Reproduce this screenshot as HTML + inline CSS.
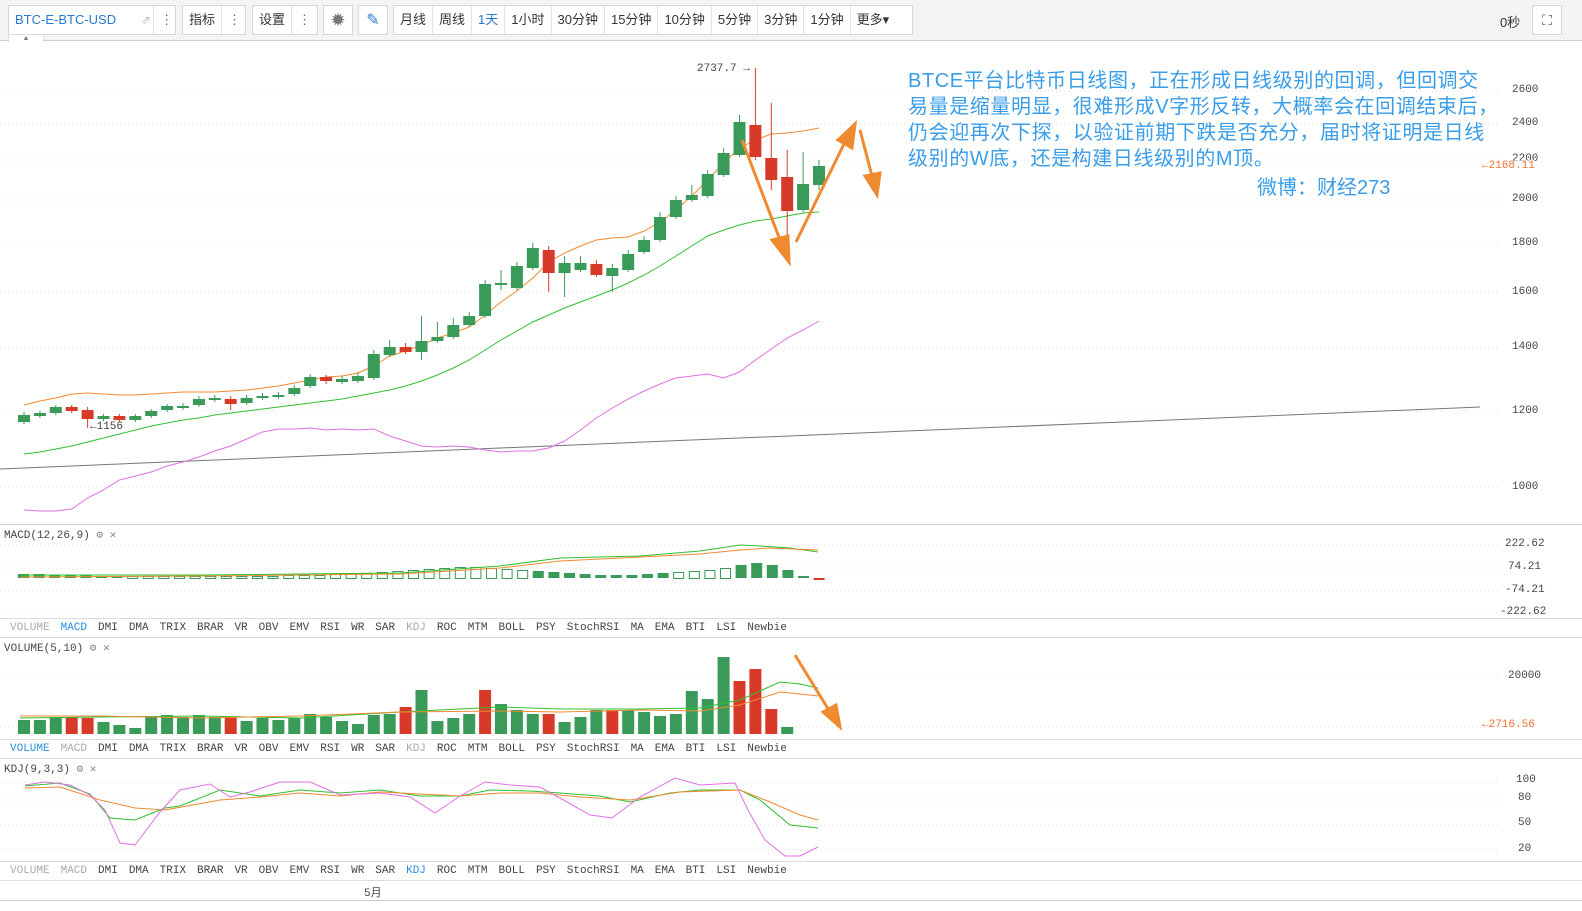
<!DOCTYPE html>
<html><head><meta charset="utf-8">
<style>
*{margin:0;padding:0;box-sizing:border-box}
body{width:1582px;height:911px;background:#fff;font-family:"Liberation Sans","Noto Sans CJK SC",sans-serif;position:relative;overflow:hidden;font-size:13px;color:#333}
.tb{position:absolute;left:0;top:0;width:1582px;height:41px;background:#f4f4f4;border-bottom:1px solid #ccc}
.bx{position:absolute;top:5px;height:30px;background:#fff;border:1px solid #d6d6d6;display:flex;align-items:center;white-space:nowrap}
.bx span{padding:0 6px;height:28px;line-height:28px;border-right:1px solid #e2e2e2;font-size:13px;white-space:nowrap;flex:none}
.bx span:last-child{border-right:none}
.mono{font-family:"Liberation Mono","DejaVu Sans Mono",monospace;font-size:11px}
.tabs{position:absolute;left:0;width:1582px;height:20px;border-top:1px solid #ddd;border-bottom:1px solid #ddd;font-family:"Liberation Mono",monospace;font-size:11px;color:#444;line-height:18px;padding-left:10px;white-space:nowrap}
.tabs b{font-weight:normal;margin-right:11px}
.g{color:#aaa}.bl{color:#2a8de0}
.ax{position:absolute;font-family:"Liberation Mono",monospace;font-size:11px;color:#444;white-space:nowrap}
.note{position:absolute;left:908px;top:68px;color:#3a9de8;font-size:20px;line-height:26px;letter-spacing:0.6px;white-space:nowrap}
</style></head><body>
<div class="tb">
 <div class="bx" style="left:8px;width:168px"><span style="color:#2a78d0;border:none;width:130px">BTC-E-BTC-USD</span><span style="color:#bbb;border:none;font-size:12px;padding:0 2px">⇗</span><span style="border-left:1px solid #e2e2e2;color:#666">⋮</span></div>
 <div class="bx" style="left:182px;width:64px"><span>指标</span><span style="color:#666">⋮</span></div>
 <div class="bx" style="left:252px;width:66px"><span>设置</span><span style="color:#666">⋮</span></div>
 <div class="bx" style="left:323px;width:30px;justify-content:center;color:#777;font-size:18px">✹</div>
 <div class="bx" style="left:358px;width:30px;justify-content:center;color:#2a78d0;font-size:16px">✎</div>
 <div class="bx" style="left:393px;width:520px"><span>月线</span><span>周线</span><span style="color:#2a78d0">1天</span><span>1小时</span><span>30分钟</span><span>15分钟</span><span>10分钟</span><span>5分钟</span><span>3分钟</span><span>1分钟</span><span>更多▾</span></div>
 <div style="position:absolute;left:1500px;top:12px;font-size:13px">0秒</div>
 <div class="bx" style="left:1532px;width:30px;justify-content:center;font-size:14px;color:#555">⛶</div>
 <div style="position:absolute;left:8px;top:34px;width:36px;height:8px;background:#fff;border:1px solid #ddd;border-bottom:none;font-size:7px;text-align:center;color:#777;line-height:8px">▲</div>
</div>
<svg id="s" width="1582" height="911" style="position:absolute;left:0;top:0"></svg>
<div class="note">BTCE平台比特币日线图，正在形成日线级别的回调，但回调交<br>易量是缩量明显，很难形成V字形反转，大概率会在回调结束后，<br>仍会迎再次下探，以验证前期下跌是否充分，届时将证明是日线<br>级别的W底，还是构建日线级别的M顶。</div>
<div style="position:absolute;left:1257px;top:171px;color:#3a9de8;font-size:20px">微博：财经273</div>
<div class="ax" style="left:1512px;top:84px">2600</div>
<div class="ax" style="left:1512px;top:117px">2400</div>
<div class="ax" style="left:1512px;top:153px">2200</div>
<div class="ax" style="left:1482px;top:160px;color:#f07030;background:rgba(255,255,255,.6)">←2168.11</div>
<div class="ax" style="left:1512px;top:193px">2000</div>
<div class="ax" style="left:1512px;top:237px">1800</div>
<div class="ax" style="left:1512px;top:286px">1600</div>
<div class="ax" style="left:1512px;top:341px">1400</div>
<div class="ax" style="left:1512px;top:405px">1200</div>
<div class="ax" style="left:1512px;top:481px">1000</div>
<div class="ax" style="left:697px;top:63px">2737.7 →</div>
<div class="ax" style="left:90px;top:421px">←1156</div>
<div class="ax" style="left:4px;top:528px">MACD(12,26,9) <span style="color:#888">⚙</span> <span style="color:#888">✕</span></div>
<div class="ax" style="left:1505px;top:538px">222.62</div>
<div class="ax" style="left:1508px;top:561px">74.21</div>
<div class="ax" style="left:1505px;top:584px">-74.21</div>
<div class="ax" style="left:1500px;top:606px">-222.62</div>
<div class="tabs" style="top:618px"><b class="g">VOLUME</b><b class="bl">MACD</b><b>DMI</b><b>DMA</b><b>TRIX</b><b>BRAR</b><b>VR</b><b>OBV</b><b>EMV</b><b>RSI</b><b>WR</b><b>SAR</b><b class="g">KDJ</b><b>ROC</b><b>MTM</b><b>BOLL</b><b>PSY</b><b>StochRSI</b><b>MA</b><b>EMA</b><b>BTI</b><b>LSI</b><b>Newbie</b></div>
<div class="ax" style="left:4px;top:641px">VOLUME(5,10) <span style="color:#888">⚙</span> <span style="color:#888">✕</span></div>
<div class="ax" style="left:1508px;top:670px">20000</div>
<div class="ax" style="left:1482px;top:719px;color:#f07030">←2716.56</div>
<div class="tabs" style="top:739px"><b class="bl">VOLUME</b><b class="g">MACD</b><b>DMI</b><b>DMA</b><b>TRIX</b><b>BRAR</b><b>VR</b><b>OBV</b><b>EMV</b><b>RSI</b><b>WR</b><b>SAR</b><b class="g">KDJ</b><b>ROC</b><b>MTM</b><b>BOLL</b><b>PSY</b><b>StochRSI</b><b>MA</b><b>EMA</b><b>BTI</b><b>LSI</b><b>Newbie</b></div>
<div class="ax" style="left:4px;top:762px">KDJ(9,3,3) <span style="color:#888">⚙</span> <span style="color:#888">✕</span></div>
<div class="ax" style="left:1516px;top:774px">100</div>
<div class="ax" style="left:1518px;top:792px">80</div>
<div class="ax" style="left:1518px;top:817px">50</div>
<div class="ax" style="left:1518px;top:843px">20</div>
<div class="tabs" style="top:861px"><b class="g">VOLUME</b><b class="g">MACD</b><b>DMI</b><b>DMA</b><b>TRIX</b><b>BRAR</b><b>VR</b><b>OBV</b><b>EMV</b><b>RSI</b><b>WR</b><b>SAR</b><b class="bl">KDJ</b><b>ROC</b><b>MTM</b><b>BOLL</b><b>PSY</b><b>StochRSI</b><b>MA</b><b>EMA</b><b>BTI</b><b>LSI</b><b>Newbie</b></div>
<div class="ax" style="left:364px;top:884px">5月</div>
<div style="position:absolute;left:0;top:900px;width:1582px;height:1px;background:#ccc"></div>
<script>
var s=document.getElementById('s'),h='';
function L(x1,y1,x2,y2,c,w,d){h+='<line x1="'+x1+'" y1="'+y1+'" x2="'+x2+'" y2="'+y2+'" stroke="'+c+'" stroke-width="'+(w||1)+'"'+(d?' stroke-dasharray="'+d+'"':'')+'/>';}
function P(pts,c,w){h+='<polyline fill="none" stroke="'+c+'" stroke-width="'+(w||1)+'" points="'+pts+'"/>';}
function R(x,y,w,hh,f,st){h+='<rect x="'+x+'" y="'+y+'" width="'+w+'" height="'+hh+'" fill="'+f+'"'+(st?' stroke="'+st+'"':'')+'/>';}
[91,124,160,200,243,292,348,411,487,545,568,591,613,677,727,782,800,825,850].forEach(function(y){L(0,y,1500,y,'#ddd',1,'1 3')});
L(0,524.5,1582,524.5,'#ccc');L(0,637.5,1582,637.5,'#ccc');
L(0,469,1480,407,'#777',1);
var C=[[1,415,422,412,424],[1,413,416,411,418],[1,407,413,405,415],[0,407,411,405,413],[0,410,419,407,428],[1,416,419,414,421],[0,416,420,414,422],[1,416,420,414,422],[1,411,416,409,418],[1,406,410,404,412],[1,406,408,403,410],[1,399,405,396,407],[1,398,400,395,402],[0,399,404,396,410],[1,398,403,395,405],[1,396,398,393,400],[1,395,397,392,399],[1,388,394,385,396],[1,377,386,374,388],[0,377,381,375,384],[1,379,382,376,384],[1,376,381,372,383],[1,354,378,350,380],[1,347,355,340,357],[0,347,352,343,354],[1,341,352,316,360],[1,337,341,322,343],[1,325,337,318,339],[1,316,325,312,327],[1,284,316,280,318],[1,283,285,270,290],[1,266,288,262,290],[1,248,268,243,270],[0,250,273,246,292],[1,263,273,256,297],[1,263,270,256,272],[0,264,275,260,277],[1,268,276,264,292],[1,254,270,250,272],[1,240,252,236,254],[1,217,240,212,242],[1,200,217,196,219],[1,195,200,185,202],[1,174,196,170,198],[1,153,175,148,177],[1,122,155,115,157],[0,125,157,68,160],[0,158,180,103,190],[0,177,211,150,262],[1,184,210,152,212],[1,166,185,160,190]];
var X=function(i){return 24+i*15.9};
var bu=[405,401,398,394,393,394,395,395,394,393,392,392,392,391,390,388,386,383,380,377,376,373,366,356,351,345,338,333,327,315,302,291,278,262,253,246,240,238,237,231,222,210,196,180,163,148,140,134,133,131,128];
var md=[454,452,449,446,442,438,434,430,426,423,420,418,415,413,411,409,407,405,403,401,399,396,393,390,386,381,375,368,360,350,340,331,322,315,308,302,296,290,283,275,266,256,246,236,230,225,221,219,216,213,212];
var lw=[510,511,511,509,498,490,480,476,472,466,462,457,451,446,439,432,429,429,428,430,429,430,429,436,441,446,447,446,447,450,452,451,451,448,441,430,418,408,399,391,384,378,376,374,378,372,360,349,338,330,321];
P(bu.map(function(y,i){return X(i)+','+y}).join(' '),'#f08a30');
P(md.map(function(y,i){return X(i)+','+y}).join(' '),'#30c030');
P(lw.map(function(y,i){return X(i)+','+y}).join(' '),'#e070e0');
C.forEach(function(c,i){var x=X(i),col=c[0]?'#3a9a5a':'#d83a2a';L(x,c[3],x,c[4],col);R(x-6,c[1],12,Math.max(2,c[2]-c[1]),col);});
var n=52;for(var i=0;i<n;i++){var x=18+i*15.6,v=[4,4,3,3,3,2,2,2,2,2,2,2,2,2,2,2,2,3,3,3,4,4,5,6,7,8,9,10,11,11,10,9,8,7,6,5,4,3,3,3,4,5,6,7,8,10,13,15,13,8,2,-2][i]||0;
var filled=(i<7)||(i>=33&&i<42)||(i>=46);var col=v<0?'#d83a2a':'#3a9a5a';
if(v>=0){if(filled)R(x,578-v,11,v,col);else R(x+.5,578.5-v,10,v,'none',col);}else R(x,578,11,2,col);}
P('20,575 200,575 400,573 500,566 560,558 640,556 700,551 740,545 760,546 790,548 818,552','#30c030');
P('20,577 200,576 400,574 500,568 560,561 640,557 700,554 740,550 770,548 818,550','#f08a30');
var vv=[14,14,17,17,16,12,9,6,17,19,17,19,17,17,13,16,14,16,20,17,13,10,19,20,27,44,13,16,20,44,30,24,20,20,12,17,24,24,24,22,18,20,43,35,77,53,65,25,7];
for(var i=0;i<vv.length;i++){var x=18+i*15.9,col=[3,4,13,24,29,33,37,45,46,47].indexOf(i)>=0?'#d83a2a':'#3a9a5a';R(x,734-vv[i],12,vv[i],col);}
P('20,718 100,717 200,716 300,718 400,712 500,707 560,709 640,709 700,708 740,700 780,682 800,684 818,688','#30c030');
P('20,716 100,716 200,718 300,716 400,712 500,711 560,712 640,710 700,711 740,705 780,692 800,694 818,696','#f08a30');
P('25,786 60,783 90,794 110,818 135,820 165,808 180,806 220,790 260,796 300,790 340,793 380,790 420,796 460,796 490,790 530,791 560,793 600,796 630,802 670,793 700,790 740,790 760,800 790,825 818,828','#30c030');
P('25,788 60,787 100,800 135,808 165,810 220,800 260,797 300,793 340,796 380,792 420,794 460,796 500,793 540,793 580,797 630,800 680,792 740,790 770,802 800,815 818,820','#f08a30');
P('25,785 45,782 70,785 90,795 105,810 120,843 135,845 160,812 180,790 210,784 230,797 250,792 280,782 310,782 340,795 380,793 410,797 435,813 460,796 485,782 510,785 540,787 560,798 590,815 612,818 640,797 675,778 700,785 735,783 748,810 765,840 785,856 800,856 818,847','#e070e0');
h+='<g stroke="#f08a30" stroke-width="3" fill="#f08a30">';
h+='<line x1="742" y1="140" x2="780" y2="240"/><polygon points="772,240 789,262 788,236"/>';
h+='<line x1="796" y1="242" x2="845" y2="142"/><polygon points="838,140 855,124 852,148"/>';
h+='<line x1="860" y1="130" x2="872" y2="176"/><polygon points="865,176 877,195 880,173"/>';
h+='<line x1="795" y1="655" x2="830" y2="712"/><polygon points="823,712 840,727 836,705"/>';
h+='</g>';
s.innerHTML=h;
</script>
</body></html>
